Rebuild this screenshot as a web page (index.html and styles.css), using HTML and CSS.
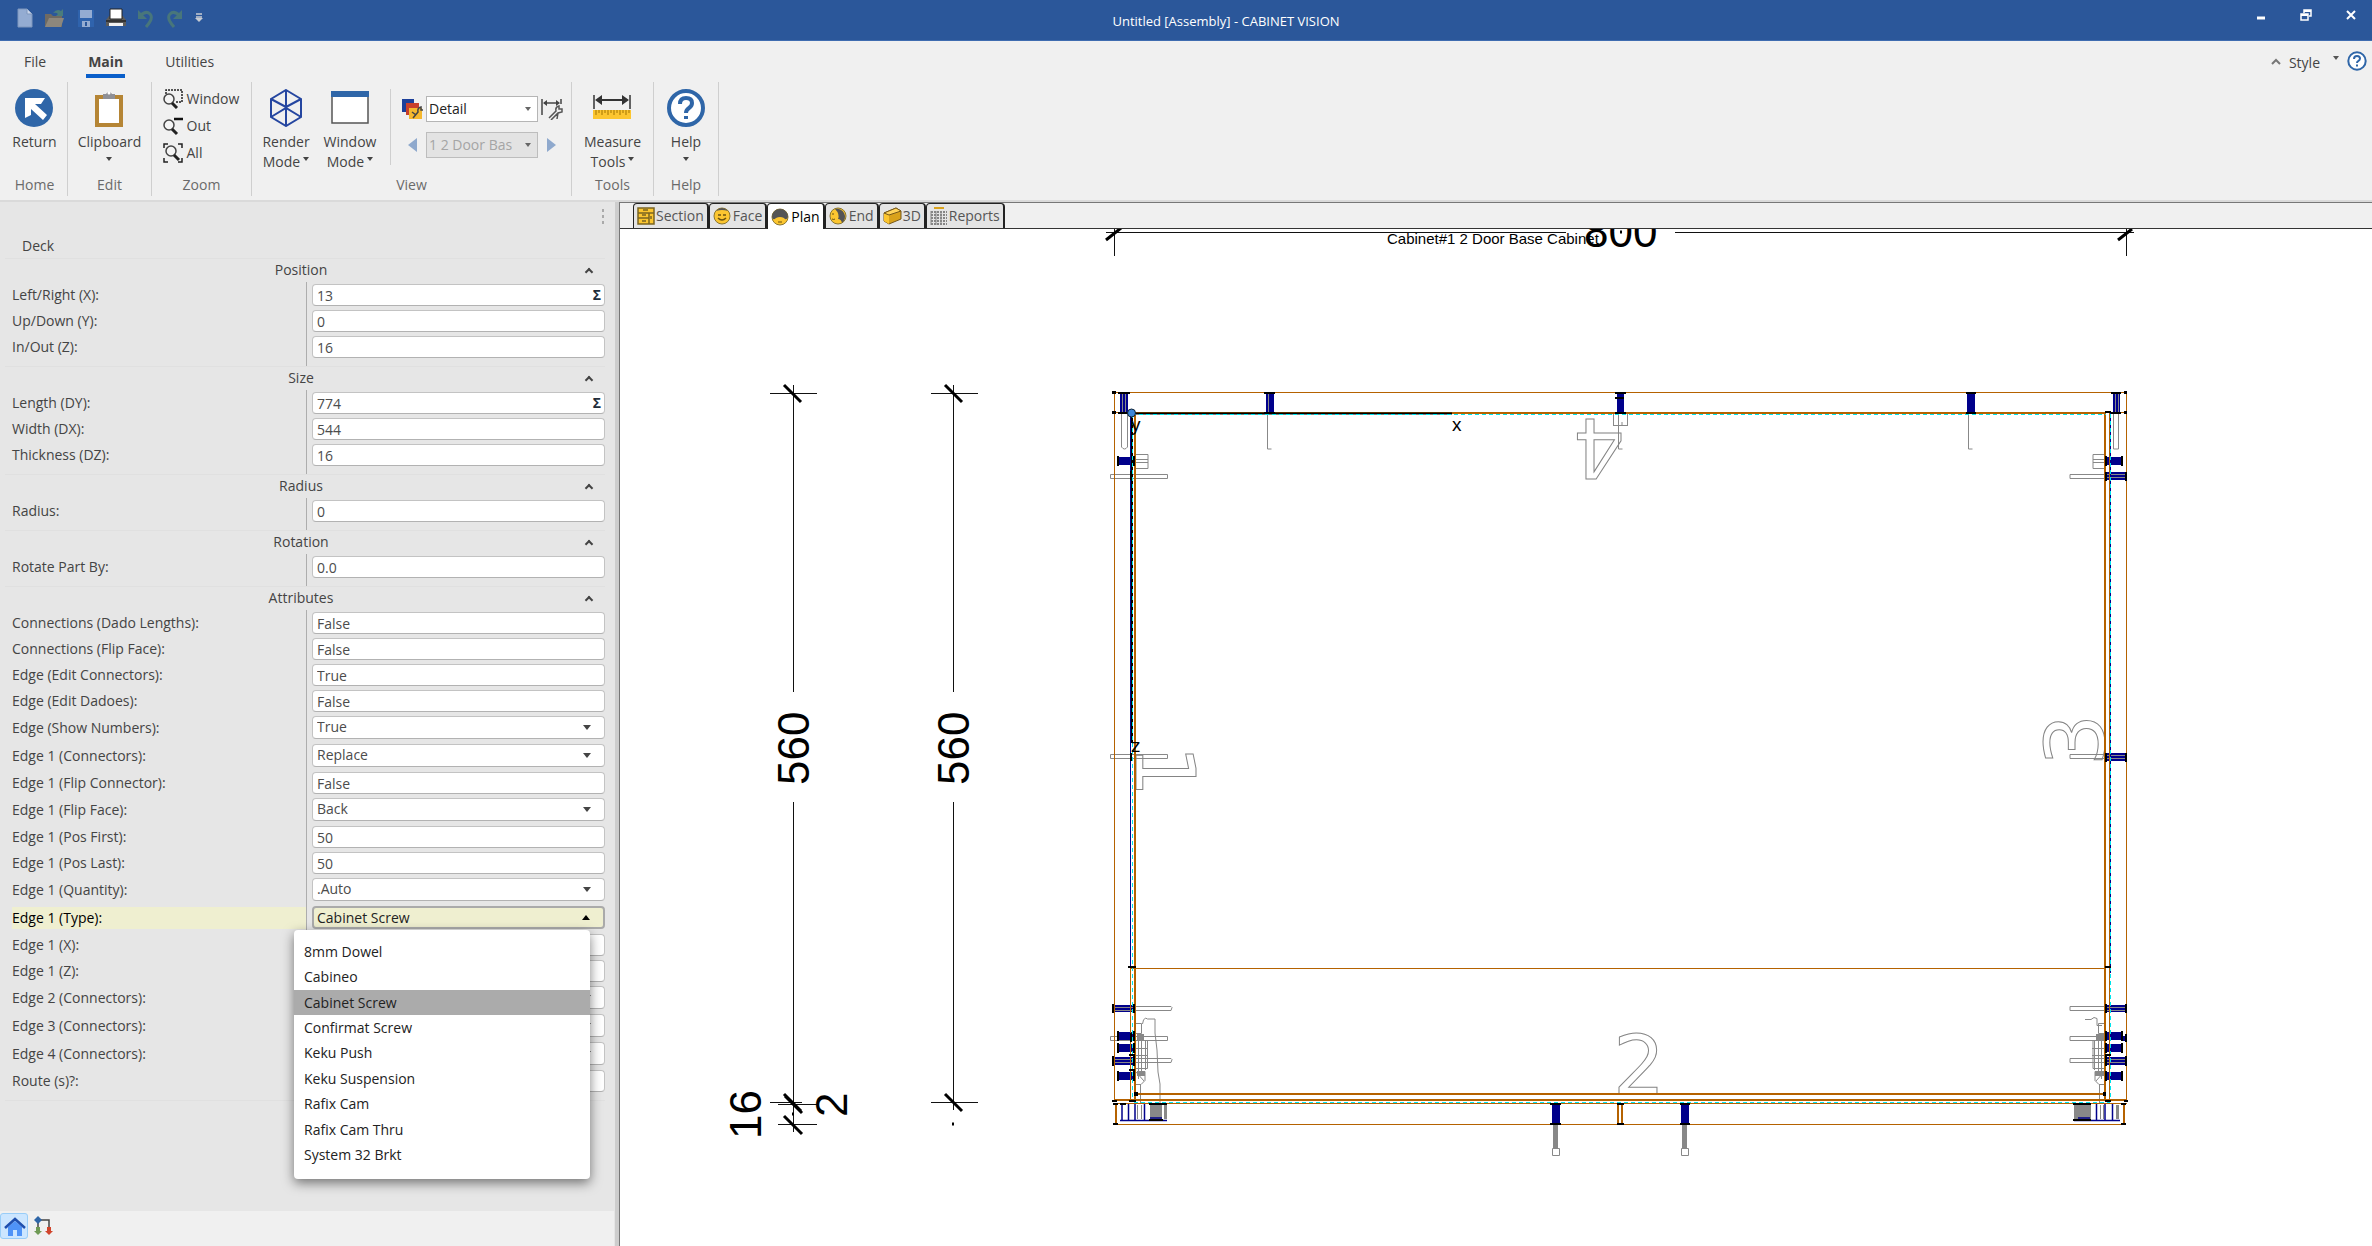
FILE: index.html
```html
<!DOCTYPE html>
<html lang="en">
<head>
<meta charset="utf-8">
<title>Untitled [Assembly] - CABINET VISION</title>
<link rel="stylesheet" href="styles.css">
</head>
<body>
<header class="titlebar">
  <div class="quick">
    <button aria-label="New"><svg width="16" height="20"><path d="M1 1h9l5 5v13H1z" fill="#94acd2" stroke="#7f97bd"/><path d="M10 1v5h5" fill="#c9d5ea" stroke="#7f97bd"/></svg></button>
    <button aria-label="Open"><svg width="22" height="20"><path d="M1 6h6l2 2h9v11H1z" fill="#6f6a62"/><path d="M5 10h15l-3 9H1z" fill="#8d877c"/><path d="M9 5q4-5 8-2l2-2v7h-7l2-2q-2-2-5-1z" fill="#4a7d7c"/></svg></button>
    <button aria-label="Save"><svg width="18" height="19"><path d="M1 1h16v17H1z" fill="#2f63ad"/><path d="M3 1h12v8H3zM5 12h8v6H5z" fill="#94acd2"/><path d="M8 13h2v4H8z" fill="#2b579a"/></svg></button>
    <button aria-label="Print"><svg width="20" height="20"><path d="M0 12l3-4h14l3 4v6H0z" fill="#5b5b5b"/><path d="M4 1h12v10H4z" fill="#fff" stroke="#222"/><path d="M0 12h20v2H0z" fill="#333"/><path d="M3 15h14v3H3z" fill="#f0f0f0"/></svg></button>
    <button aria-label="Undo"><svg width="18" height="19"><path d="M3 7q6-6 10-2t-4 13" fill="none" stroke="#48767b" stroke-width="3"/><path d="M1 1v9h9z" fill="#48767b"/></svg></button>
    <button aria-label="Redo"><svg width="18" height="19"><path d="M14 7q-6-6-10-2t4 13" fill="none" stroke="#48767b" stroke-width="3"/><path d="M16 1v9H7z" fill="#48767b"/></svg></button>
    <button aria-label="Customize toolbar"><svg width="8" height="10"><path d="M1 1h6M1 4h6" stroke="#c7cbd2" stroke-width="1.5"/><path d="M0 5h8L4 9z" fill="#c7cbd2"/></svg></button>
  </div>
  <h1 class="title">Untitled [Assembly] - CABINET VISION</h1>
  <div class="winctl">
    <button aria-label="Minimize"><svg width="12" height="12"><path d="M2 9h8" stroke="#fff" stroke-width="3"/></svg></button>
    <button aria-label="Restore"><svg width="12" height="12"><path d="M1 5h7v6H1zM4 4V1h7v6H9" fill="none" stroke="#fff" stroke-width="1.5"/><path d="M1 6h7M4 2h7" stroke="#fff" stroke-width="2"/></svg></button>
    <button aria-label="Close"><svg width="12" height="12"><path d="M2 2l8 8M10 2l-8 8" stroke="#fff" stroke-width="2"/></svg></button>
  </div>
</header>

<nav class="menu">
  <a href="#file">File</a>
  <a href="#main" class="on">Main</a>
  <a href="#utilities">Utilities</a>
  <div class="menu-right">
    <svg width="10" height="8"><path d="M1 7l4-4 4 4" fill="none" stroke="#777" stroke-width="2"/></svg>
    <button class="style-btn">Style</button>
    <svg width="6" height="12"><path d="M0 1h6L3 5z" fill="#555"/></svg>
    <button aria-label="Help"><svg width="20" height="20"><circle cx="10" cy="10" r="8.700" fill="#fff" stroke="#2f66a8" stroke-width="2"/><path d="M7 8q0-3 3-3t3 2.500q0 1.500-1.500 2.300T10 12M10 13.500v2" fill="none" stroke="#2f66a8" stroke-width="2"/></svg></button>
  </div>
</nav>

<section class="ribbon">
  <div class="group g-home">
    <div class="tools">
      <button class="big"><svg width="38" height="38"><circle cx="19" cy="19" r="19" fill="#2f66a8"/><path d="M10 29V9h20l-4 6h-6l12 11-4 5-12-11v6z" fill="#fff"/></svg><span>Return</span></button>
    </div>
    <h2>Home</h2>
  </div>
  <div class="group g-edit">
    <div class="tools">
      <button class="big"><svg width="28" height="38"><path d="M2 8h24v28H2z" fill="#fff" stroke="#b58535" stroke-width="4"/><path d="M8 5h3a3.500 4 0 0 1 6 0h3v5H8z" fill="#8f9096"/><circle cx="14" cy="4" r="1.500" fill="#fff"/></svg><span>Clipboard</span><i class="tri"></i></button>
    </div>
    <h2>Edit</h2>
  </div>
  <div class="group g-zoom">
    <div class="tools zoomlist">
      <button><svg width="20" height="20"><path d="M3 5V1h16v12h-6" fill="none" stroke="#222" stroke-width="1.500" stroke-dasharray="2 1"/><circle cx="6" cy="10" r="5" fill="#f4f4f4" stroke="#444" stroke-width="1.500"/><path d="M9 14l5 5" stroke="#222" stroke-width="3"/></svg>Window</button>
      <button><svg width="20" height="20"><path d="M11 3h9" stroke="#111" stroke-width="2.500"/><circle cx="6" cy="9" r="5" fill="#f4f4f4" stroke="#444" stroke-width="1.500"/><path d="M9 13l5 5" stroke="#222" stroke-width="3"/></svg>Out</button>
      <button><svg width="20" height="20"><path d="M1 5V1h4M15 1h4v4M1 15v4h4M15 19h4v-4" fill="none" stroke="#222" stroke-width="1.500"/><circle cx="8" cy="8" r="5" fill="#f4f4f4" stroke="#444" stroke-width="1.500"/><path d="M11 12l5 5" stroke="#222" stroke-width="3"/></svg>All</button>
    </div>
    <h2>Zoom</h2>
  </div>
  <div class="group g-view">
    <div class="tools">
      <button class="big"><svg width="34" height="38" fill="none" stroke="#2546a0" stroke-width="2"><path d="M17 1l15 9v18l-15 9-15-9V10z"/><path d="M2 10l15 8 15-8M17 18v19M17 1v17M2 28l15-9 15 9"/></svg><span>Render<br>Mode<i class="tri in"></i></span></button>
      <button class="big"><svg width="38" height="38"><path d="M1 3h36v31H1z" fill="#fff" stroke="#555" stroke-width="1.500"/><path d="M0 2h38v6H0z" fill="#2f66a8"/></svg><span>Window<br>Mode<i class="tri in"></i></span></button>
      <div class="pickers">
        <div class="pick">
          <svg width="22" height="22"><path d="M1 1h12v13H1z" fill="#1c3f9a"/><path d="M5 5h13v12H5z" fill="#c8402c"/><path d="M8 10h13v11H8z" fill="#f5b82e"/><path d="M12 20l5-6q-1-4 3-5v3h2M11 14l4 3" fill="none" stroke="#444" stroke-width="1.500"/></svg>
          <select aria-label="View detail"><option>Detail</option></select>
          <svg width="22" height="22"><path d="M1 1v16M20 1v5M3 5h14" stroke="#444" stroke-width="1.500"/><path d="M2 5l4-3v6zM19 5l-4-3v6z" fill="#444"/><path d="M8 20l7-7q-1-4 3-5v3h3v3l-4 1-7 7M17 15l-1 6" fill="none" stroke="#555" stroke-width="1.500"/></svg>
        </div>
        <div class="pick">
          <button aria-label="Previous"><svg width="10" height="14"><path d="M10 0v14L1 7z" fill="#8fa9cd"/></svg></button>
          <select aria-label="Cabinet" disabled><option>1 2 Door Bas</option></select>
          <button aria-label="Next"><svg width="10" height="14"><path d="M0 0v14l9-7z" fill="#8fa9cd"/></svg></button>
        </div>
      </div>
    </div>
    <h2>View</h2>
  </div>
  <div class="group g-tools">
    <div class="tools">
      <button class="big"><svg width="38" height="38"><path d="M1 6v14M37 6v14" stroke="#333" stroke-width="1.500"/><path d="M5 11h28" stroke="#333" stroke-width="2"/><path d="M2 11l7-5v10zM36 11l-7-5v10z" fill="#333"/><path d="M0 21h38v9H0z" fill="#fcc630"/><path d="M3 21v5M6 21v3M9 21v5M12 21v3M15 21v5M18 21v3M21 21v5M24 21v3M27 21v5M30 21v3M33 21v5M36 21v3" stroke="#a27400"/></svg><span>Measure<br>Tools<i class="tri in"></i></span></button>
    </div>
    <h2>Tools</h2>
  </div>
  <div class="group g-help">
    <div class="tools">
      <button class="big"><svg width="38" height="38"><circle cx="19" cy="19" r="17" fill="#fff" stroke="#2f66a8" stroke-width="4"/><path d="M13 15q0-6 6-6t6 5q0 3-3 5t-3 5M19 27v3" fill="none" stroke="#2f66a8" stroke-width="4"/></svg><span>Help</span><i class="tri"></i></button>
    </div>
    <h2>Help</h2>
  </div>
</section>

<main class="work">
  <aside class="panel">
    <div class="grip"><i></i><i></i><i></i></div>
    <h2 class="part">Deck</h2>
    <form class="props">
      <section><h3>Position<i class="chev"></i></h3><div class="rows">
        <div class="row"><label for="px">Left/Right (X):</label><div class="cell"><input id="px" value="13"><b>Σ</b></div></div>
        <div class="row"><label for="py">Up/Down (Y):</label><div class="cell"><input id="py" value="0"></div></div>
        <div class="row"><label for="pz">In/Out (Z):</label><div class="cell"><input id="pz" value="16"></div></div>
      </div></section>
      <section><h3>Size<i class="chev"></i></h3><div class="rows">
        <div class="row"><label for="dy">Length (DY):</label><div class="cell"><input id="dy" value="774"><b>Σ</b></div></div>
        <div class="row"><label for="dx">Width (DX):</label><div class="cell"><input id="dx" value="544"></div></div>
        <div class="row"><label for="dz">Thickness (DZ):</label><div class="cell"><input id="dz" value="16"></div></div>
      </div></section>
      <section><h3>Radius<i class="chev"></i></h3><div class="rows">
        <div class="row"><label for="ra">Radius:</label><div class="cell"><input id="ra" value="0"></div></div>
      </div></section>
      <section><h3>Rotation<i class="chev"></i></h3><div class="rows">
        <div class="row"><label for="ro">Rotate Part By:</label><div class="cell"><input id="ro" value="0.0"></div></div>
      </div></section>
      <section><h3>Attributes<i class="chev"></i></h3><div class="rows">
        <div class="row"><label for="a1">Connections (Dado Lengths):</label><div class="cell"><input id="a1" value="False"></div></div>
        <div class="row"><label for="a2">Connections (Flip Face):</label><div class="cell"><input id="a2" value="False"></div></div>
        <div class="row"><label for="a3">Edge (Edit Connectors):</label><div class="cell"><input id="a3" value="True"></div></div>
        <div class="row"><label for="a4">Edge (Edit Dadoes):</label><div class="cell"><input id="a4" value="False"></div></div>
        <div class="row sel"><label for="a5">Edge (Show Numbers):</label><div class="cell"><select id="a5"><option>True</option></select></div></div>
        <div class="row sel"><label for="a6">Edge 1 (Connectors):</label><div class="cell"><select id="a6"><option>Replace</option></select></div></div>
        <div class="row"><label for="a7">Edge 1 (Flip Connector):</label><div class="cell"><input id="a7" value="False"></div></div>
        <div class="row sel"><label for="a8">Edge 1 (Flip Face):</label><div class="cell"><select id="a8"><option>Back</option></select></div></div>
        <div class="row"><label for="a9">Edge 1 (Pos First):</label><div class="cell"><input id="a9" value="50"></div></div>
        <div class="row"><label for="a10">Edge 1 (Pos Last):</label><div class="cell"><input id="a10" value="50"></div></div>
        <div class="row sel"><label for="a11">Edge 1 (Quantity):</label><div class="cell"><select id="a11"><option>.Auto</option></select></div></div>
        <div class="row sel active"><label for="a12">Edge 1 (Type):</label><div class="cell"><select id="a12"><option>Cabinet Screw</option></select>
          <ul class="popup" role="listbox">
            <li role="option">8mm Dowel</li><li role="option">Cabineo</li><li role="option" aria-selected="true">Cabinet Screw</li><li role="option">Confirmat Screw</li><li role="option">Keku Push</li><li role="option">Keku Suspension</li><li role="option">Rafix Cam</li><li role="option">Rafix Cam Thru</li><li role="option">System 32 Brkt</li>
          </ul></div></div>
        <div class="row"><label for="a13">Edge 1 (X):</label><div class="cell"><input id="a13"></div></div>
        <div class="row"><label for="a14">Edge 1 (Z):</label><div class="cell"><input id="a14"></div></div>
        <div class="row sel"><label for="a15">Edge 2 (Connectors):</label><div class="cell"><select id="a15"></select></div></div>
        <div class="row sel"><label for="a16">Edge 3 (Connectors):</label><div class="cell"><select id="a16"></select></div></div>
        <div class="row sel"><label for="a17">Edge 4 (Connectors):</label><div class="cell"><select id="a17"></select></div></div>
        <div class="row"><label for="a18">Route (s)?:</label><div class="cell"><input id="a18"></div></div>
      </div></section>
    </form>
    <div class="dock">
      <button class="home" aria-label="Home"><svg width="22" height="20"><path d="M4 10v9h5v-6h4v6h5v-9l-7-6z" fill="#4f93f7"/><path d="M1 11l10-9 10 9" fill="none" stroke="#1f4fae" stroke-width="2.500"/></svg></button>
      <button aria-label="Tree"><svg width="20" height="22"><path d="M4 5h11v10M4 5v10" fill="none" stroke="#444" stroke-width="1.500"/><path d="M4 1l4 4-4 4-4-4z" fill="#2f66a8"/><path d="M2 12h4v4h2l-4 4-4-4h2z" fill="#6f9a55"/><path d="M13 12h4v4h2l-4 4-4-4h2z" fill="#d0452c"/></svg></button>
    </div>
  </aside>

  <section class="viewer">
    <div class="tabs" role="tablist">
      <button role="tab"><svg width="18" height="18"><path d="M1 1h16v16H1zM1 6h16M1 11h11M12 6v11M6 3h5M5 8h4M5 14h4M14 9v3" fill="#fcc630" stroke="#7a6420" stroke-width="1.500"/></svg>Section</button>
      <button role="tab"><svg width="19" height="18"><circle cx="9" cy="9" r="8" fill="#fcc630" stroke="#8a7630"/><path d="M3 4q6-6 12 0-6-2-12 0" fill="#555"/><path d="M5 8h3M10 8h3M5 11q4 4 8 0" fill="none" stroke="#6b5310" stroke-width="1.500"/></svg>Face</button>
      <button role="tab" aria-selected="true"><svg width="19" height="18"><circle cx="9" cy="9" r="8" fill="#fcc630" stroke="#8a7630"/><path d="M1 9a8 8 0 0 1 16 0q-2 4-4 1-4-2-8 0-3 3-4-1" fill="#555"/><path d="M7 14h4" stroke="#6b5310"/></svg>Plan</button>
      <button role="tab"><svg width="19" height="18"><circle cx="9" cy="9" r="8" fill="#fcc630" stroke="#8a7630"/><path d="M6 2a8 8 0 0 1 7 14q-1-4-4-4 2-5-3-10" fill="#555"/><path d="M3 7h2M3 12q2 1 3 0" stroke="#6b5310" fill="none"/></svg>End</button>
      <button role="tab"><svg width="19" height="18"><path d="M1 6l12-5 5 3v8L6 17l-5-3z" fill="#d9a21c" stroke="#76581a"/><path d="M1 6l5 2v9l-5-3z" fill="#fcc630"/><path d="M1 6l12-5 5 3L6 8z" fill="#ffd45c" stroke="#76581a"/></svg>3D</button>
      <button role="tab"><svg width="18" height="18"><path d="M4 0h10v2H4z" fill="#d9a21c"/><path d="M1 5h16M1 8h16M1 11h16M1 14h16M1 17h16" stroke="#666" stroke-width="1.500" stroke-dasharray="2 1"/><path d="M1 4v14M6 4v14M11 4v14" stroke="#888"/></svg>Reports</button>
    </div>
    <svg class="drawing" viewBox="620 229 1752 1017" preserveAspectRatio="xMinYMin slice">
      <!-- hardware outlines -->
      <g class="gray">
        <path d="M1121.500 414v33q3 4 6 0v-33M2113.500 414v35h5v-35"/>
        <path d="M1267.500 414v35h4M1618.500 414v35h4M1968.500 414v35h4"/>
        <rect x="1613.500" y="413.500" width="14" height="12"/>
        <path d="M1622 422v4"/>
        <path d="M1135 454.500h13v14h-13M1135 459.500h13M1135 462.500h13M2106 454.500h-13v14h13M2106 459.500h-13M2106 462.500h-13"/>
        <path d="M1110.500 474.500h57v4h-57zM1110.500 754.500h57v4h-57zM1110.500 1036.500h57v4h-57z"/>
        <path d="M2106 474.500h-36v4h36M2106 754.500h-36v4h36M2106 1036.500h-36v4h36M2106 1006.500h-36v4h36M2106 1058.500h-36v4h36"/>
        <path d="M1135 1006.500h36l1 1-1 3h-36M1135 1058.500h36l1 1-1 3h-36"/>
        <path d="M1142.500 1024l1-4 2-2 2 1h7.500v14l2 17 1 22 2 12v20M1140.500 1084v20M2085 1019.500h6l3-2 3 1v7h5M2099.500 1084v20"/>
        <path d="M1135.500 1023.500h6v10h-6zM1138.500 1033v46M1141.500 1040v36M1145.500 1040v30M1135.500 1040.500h12v28h-12M1135 1048.500h13M1135 1055.500h13M1135 1084.500h6l4-4v-9M1136 1072l8 9"/>
        <path d="M2104.500 1023.500h-6v10h6M2101.500 1033v46M2098.500 1040v36M2094.500 1040v30M2105 1040.500h-12v28h12M2105 1048.500h-13M2105 1055.500h-13M2105 1084.500h-6l-4-4v-9M2104 1072l-8 9"/>
      </g>
      <path class="grayfill" d="M1137 1034h7v6h-7zM1137 1071h8v5h-8zM2096 1034h8v6h-8zM2095 1071h9v5h-9zM1150 1105h12v14h-12zM1164 1105h3v14h-3zM2074 1105h17v14h-17zM2116 1105h3v14h-3zM1553 1125h5v23h-5zM1682 1125h5v23h-5z"/>
      <path class="gray" d="M1552.500 1148.500h7v7h-7zM1681.500 1148.500h7v7h-7zM1137.500 1105v14M2100.500 1105v14M2103.500 1105v14M1141.500 1105v14"/>
      <!-- edge numbers -->
      <g class="edge">
        <text transform="translate(1625 419) rotate(180)" x="0" y="0">4</text>
        <text transform="translate(1136 746) rotate(90)" x="-1" y="0">1</text>
        <text x="1613" y="1094">2</text>
        <text transform="translate(2104 766) rotate(-90)" x="0" y="0">3</text>
      </g>
      <!-- dowels and screws -->
      <path class="navy" d="M1120 393h8v20h-8zM1266 393h8v20h-8zM1617 393h7v20h-7zM1967 393h8v20h-8zM2113 393h7v20h-7zM1118 457h16v8h-16zM1113 1005h22v7h-22zM1118 1032h17v8h-17zM1118 1044h17v8h-17zM1113 1057h22v8h-22zM1118 1072h17v8h-17zM2106 457h16v8h-16zM2106 472h21v8h-21zM2106 753h21v8h-21zM2106 1005h21v7h-21zM2106 1032h16v8h-16zM2122 1036h5v5h-5zM2106 1044h16v8h-16zM2106 1057h21v8h-21zM2106 1072h16v8h-16zM1552 1104h8v20h-8zM1681 1104h8v20h-8z"/>
      <path d="M1122.500 394v18M1125.500 394v18M1268.500 394v18M2115.500 394v18M2118.500 394v18M1114 1007.500h20M1114 1010.500h20M1114 1059.500h20M1114 1062.500h20M2107 474.500h19M2107 477.500h19M2107 755.500h19M2107 758.500h19M2107 1007.500h19M2107 1010.500h19M2107 1059.500h19M2107 1062.500h19" class="gray"/>
      <path d="M1122 1104v16M1128.500 1104v16M1135 1104v16M1144.500 1104v16M2096.500 1104v16M2105 1104v16M2112.500 1104v16M1120 1120.500h47M2074 1120.500h46M1150 1118h12M2078 1118h12" fill="none" stroke="#00008b" stroke-width="1.500"/>
      <!-- panels -->
      <g class="wood">
        <path d="M1114.500 1101V392.500h1012V1101M1131 968.500h974M1130.500 968v134M2109.500 413v689M1115 1103.500h1012M1115 1124.500h1009"/>
        <path d="M1114 412.500h1012"/><path class="thick" d="M1132 413h974M1135 413v688M2105 413v688M1135 1094h970M1114 1100h1013M1116 1104v20M2124 1104v20M1618 1104v20M1622 1104v20"/>
      </g>
      <path d="M1130.500 413v555M2110.500 413v560" stroke="#00008b"/>
      <path d="M1132 413v330M1132 413.500h320" stroke="#000" stroke-width="2" fill="none"/>
      <path d="M1132 414.500h974M1132.500 414v688M2110.500 414v688M1134 1102.500h976" stroke="#00e5ee" stroke-dasharray="4 3" fill="none"/>
      <!-- end caps -->
      <path d="M1118 393h12M1118 413h12M1264 393h11M1264 413h11M1615 393h11M1615 398h9M1615 413h11M1966 393h10M1966 413h10M2111 393h10M2111 413h10M1118 456v10M1134 456v10M2106 456v10M2122 456v10M2106 472v9M2126 472v9M2106 753v9M2126 753v9M1113 1004v9M1134 1004v9M2106 1004v9M2126 1004v9M1118 1031v10M1134 1031v10M1118 1043v10M1134 1043v10M1113 1056v10M1134 1056v10M1118 1071v10M1134 1071v10M2106 1031v10M2122 1031v10M2126 1034v8M2106 1043v10M2122 1043v10M2106 1056v10M2126 1056v10M2106 1071v10M2122 1071v10M1131 471v9M1131 753v8M1131 1033v9M1550 1104h11M1550 1124h11M1680 1104h10M1680 1124h10M1617 1104h7M1617 1124h7M1120 1104h6M1149 1104h18M1149 1120h14M2073 1104h18M2073 1120h18M1128 967h8M1129 1055h6M1129 1070h6M2105 967h6M2105 1055h6M2105 412h6M1112 1101h5M1129 1101h7M2105 1101h6M2124 1101h4M1113 1104h5M1113 1124h5M2121 1104h5M2121 1124h5" stroke="#000" stroke-width="2"/>
      <path d="M1112 391h4v3h-4zM1112 411h4v3h-4zM2124 391h3v3h-3zM2124 411h3v3h-3zM1134 1092h4v4h-4zM2103 1092h3v4h-3z"/>
      <circle cx="1131.500" cy="413" r="4" fill="#3c86d8" stroke="#123"/>
      <!-- dimension lines -->
      <g class="dim">
        <path d="M1106 232.500h460M1114.500 229v27M1675 232.500h459M2126.500 229v27M793.500 385v307M793.500 802v330M953.500 385v307M953.500 802v308M770 393.500h47M931 393.500h47M770 1102.500h32M778 1104.500h39M778 1124.500h39M931 1102.500h47"/>
        <path class="tick" d="M1106 240l15-12M2118 240l14-11M784 385l17 17M945 385l17 17M784 1094l17 17M785 1096l17 17M784 1116l18 18M945 1094l17 17"/>
        <path class="tick" d="M792 1114h2M952 1124h2M1620 232h2"/>
      </g>
      <g class="dimtext">
        <text x="1584" y="247">800</text>
        <text transform="translate(809 785) rotate(-90)">560</text>
        <text transform="translate(969 785) rotate(-90)">560</text>
        <text transform="translate(761 1139) rotate(-90)">16</text>
        <text transform="translate(847 1117) rotate(-90)">2</text>
      </g>
      <g class="note">
        <text x="1387" y="244">Cabinet#1 2 Door Base Cabinet</text>
        <text x="1452" y="431" class="axis">x</text><text x="1131" y="431" class="axis">y</text><text x="1131" y="752" class="axis">z</text>
      </g>
    </svg>
  </section>
</main>
</body>
</html>
```
FILE: styles.css
```css
* { box-sizing: border-box; }
body { margin: 0; min-height: 100vh; display: flex; flex-direction: column; font-family: "Open Sans", sans-serif; font-size: 14px; line-height: 20px; color: #444; background: #f0f0f0; }
button { font: inherit; color: inherit; border: 0; background: none; padding: 0; }
h1, h2, h3 { margin: 0; font: inherit; }
svg { display: block; flex: none; }

.titlebar { display: grid; grid-template-columns: 1fr auto 1fr; background: #2b579a; height: 41px; border-bottom: 1px solid #3f6cb0; color: #fff; align-items: start; }
.quick { display: flex; align-items: center; gap: 11px; padding: 8px 0 0 17px; height: 28px; }
.title { font-size: 13px; padding-left: 80px; line-height: 42px; }
.winctl { display: flex; justify-content: flex-end; gap: 33px; padding: 9px 15px 0 0; }

.menu { display: flex; height: 41px; padding-left: 22px; gap: 38px; align-items: flex-start; }
.menu a { color: #444; text-decoration: none; padding: 11px 2px 2px; height: 37px; border-bottom: 4px solid transparent; }
.menu a.on { font-weight: 700; border-color: #0a5fca; }
.menu-right { margin-left: auto; display: flex; align-items: center; gap: 8px; padding: 8px 5px 0 0; }
.style-btn { padding: 4px 5px 0 0; }

.ribbon { display: flex; height: 120px; border-bottom: 2px solid #dadada; padding-bottom: 4px; }
.group { display: flex; flex-direction: column; border-right: 1px solid #cfcfcf; align-items: center; }
.group h2 { color: #6a6a6a; margin: auto 0 1px; }
.g-home { width: 68px; padding-left: 2px; }
.g-edit { width: 84px; }
.g-zoom { width: 100px; }
.g-view { width: 320px; }
.g-tools { width: 82px; }
.g-help { width: 65px; }
.tools { display: flex; padding-top: 7px; }
.big { display: flex; flex-direction: column; align-items: center; gap: 5px; }
.tri { width: 0; height: 0; border: 3px solid transparent; border-top: 4px solid #444; border-bottom: 0; }
.tri.in { display: inline-block; margin-left: 3px; vertical-align: 6px; }
.zoomlist { flex-direction: column; gap: 7px; width: 90px; }
.zoomlist button { display: flex; gap: 4px; align-items: center; padding-left: 6px; }
.g-view .big { width: 64px; }
.pickers { border-left: 1px solid #cfcfcf; margin-left: 8px; padding: 7px 0 0 10px; display: flex; flex-direction: column; gap: 10px; height: 76px; }
.g-view .tools { width: 100%; }
.g-view .big:first-child { margin-left: 2px; }
.pick { display: grid; grid-template-columns: 22px 112px 22px; gap: 3px; align-items: center; }
.pick button { justify-self: center; }
.pick select { height: 26px; font: inherit; color: #222; border: 1px solid #b5b5b5; padding: 0 16px 0 2px; appearance: none; background: #fff url("data:image/svg+xml,%3Csvg xmlns='http://www.w3.org/2000/svg' width='6' height='4'%3E%3Cpath d='M0 0h6L3 4z' fill='%23666'/%3E%3C/svg%3E") right 6px center no-repeat; }
.pick select:disabled { background-color: #e3e3e3; color: #a5a5a5; opacity: 1; border-color: #bdbdbd; }

.work { display: flex; flex: 1; }
.panel { width: 620px; flex: none; background: #e6e6e6; border-right: 1px solid #777; display: flex; flex-direction: column; box-shadow: inset -4px 0 #cdcdcd; }
.grip { display: flex; flex-direction: column; align-self: flex-end; gap: 3px; padding: 7px 15px 0 0; height: 34px; }
.grip i { width: 2px; height: 3px; background: #aaa; }
.part { padding: 0 22px; height: 22px; }
.props { padding: 0 14px 0 5px; }
.props section { border-top: 1px solid #e0e0e0; }
.props section:last-child { border-bottom: 1px solid #e0e0e0; }
h3 { height: 23px; line-height: 22px; text-align: center; position: relative; padding-right: 8px; }
.chev { position: absolute; right: 13px; top: 10px; width: 6px; height: 6px; border: solid #444; border-width: 2px 0 0 2px; transform: rotate(45deg); }
.rows { padding-bottom: 6px; background: linear-gradient(#adadad, #adadad) 301px 0 / 1px 100% no-repeat; }
.row { display: grid; grid-template-columns: 301px 1fr; height: 26px; }
.row.sel { height: 28px; }
.row label { margin-left: 7px; line-height: 26px; }
.row.sel label { line-height: 22px; margin: 3px 0 3px 7px; }
.cell { position: relative; padding: 2px 0 0 6px; }
.cell input, .cell select { display: block; width: 100%; height: 22px; border: 1px solid #c3c3c3; border-bottom-color: #b2b2b2; border-radius: 4px; background-color: #fff; font: inherit; color: #4c4c4c; padding: 0 4px; }
.cell select { height: 23px; appearance: none; background-image: url("data:image/svg+xml,%3Csvg xmlns='http://www.w3.org/2000/svg' width='8' height='5'%3E%3Cpath d='M0 0h8L4 5z' fill='%23444'/%3E%3C/svg%3E"); background-repeat: no-repeat; background-position: right 13px center; padding-bottom: 1px; }
.cell b { position: absolute; right: 4px; top: 3px; font-size: 14px; color: #222d3a; }
.active label { background: #efefd0; color: #000; margin-right: 1px; }
.cell .popup { position: absolute; z-index: 2; left: -12px; top: 26px; width: 296px; height: 249px; margin: 0; padding: 9px 0 11px; list-style: none; display: flex; flex-direction: column; background: #fff; border-radius: 4px; box-shadow: 0 4px 12px rgba(0, 0, 0, .5); color: #222; }
.popup li { flex: 1; display: flex; align-items: center; padding: 0 10px; }
.popup li[aria-selected] { background: #ababab; }
.active .cell select { background-color: #efefd0; border: 2px solid #aaa; color: #222; padding: 0 3px 1px; background-image: url("data:image/svg+xml,%3Csvg xmlns='http://www.w3.org/2000/svg' width='8' height='5'%3E%3Cpath d='M0 5h8L4 0z' fill='%23000'/%3E%3C/svg%3E"); }
.dock { margin: auto 5px 0 0; height: 35px; background: #f0f0f0; display: flex; align-items: center; gap: 6px; padding-bottom: 6px; }
.home { background: #cce6ff; border: 1px solid #99cdf8; border-radius: 3px; padding: 3px 2px 3px 3px; height: 26px; width: 28px; }

.viewer { flex: 1; min-width: 0; display: flex; flex-direction: column; background: #fff; }
.tabs { display: flex; height: 27px; padding-left: 13px; background: #f0f0f0; border-top: 1px solid #777; border-bottom: 1px solid #333; }
.tabs button { display: flex; align-items: center; gap: 1px; padding: 0 3px; border: 1px solid #222; border-right-width: 2px; border-bottom: 0; border-radius: 4px 4px 0 0; background: #e4e4e4; color: #555; }
.tabs button[aria-selected] { background: #fff; color: #000; margin-bottom: -1px; }
.drawing { width: 100%; flex: 1; min-height: 0; }
.gray { fill: none; stroke: #888; }
.grayfill { fill: #888; }
.navy { fill: #00008b; }
.wood { fill: none; stroke: #b56200; }
.thick { stroke-width: 2; }
.edge { fill: none; stroke: #848484; font: 82px "DejaVu Sans", sans-serif; }
.dim { stroke: #111; fill: none; }
.tick { stroke: #000; stroke-width: 3; }
.dimtext { font: 44px "Liberation Sans", Arial, sans-serif; fill: #000; }
.note { font: 15px "Liberation Sans", Arial, sans-serif; fill: #000; }
.axis { font-size: 19px; }
```
